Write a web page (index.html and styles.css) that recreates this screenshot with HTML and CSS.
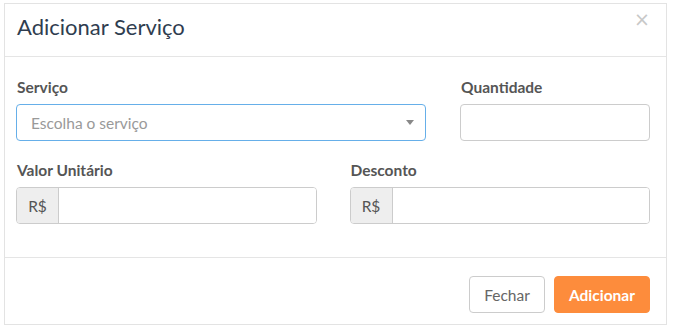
FILE: index.html
```html
<!DOCTYPE html>
<html lang="pt-BR">
<head>
    <meta charset="UTF-8">
    <title>Adicionar Serviço</title>
    <link rel="stylesheet" href="styles.css">
</head>
<body>
    <div class="modal">
        <!-- cabeçalho -->
        <div class="modal-header">
            <h4 class="modal-title">Adicionar Serviço</h4>
            <button class="close" type="button">&times;</button>
        </div>

        <!-- corpo -->
        <div class="modal-body">
            <div class="row row-top">
                <div class="field">
                    <label>Serviço</label>
                    <div class="select">
                        <span class="placeholder">Escolha o serviço</span>
                        <span class="caret"></span>
                    </div>
                </div>
                <div class="field">
                    <label>Quantidade</label>
                    <input class="input" type="text">
                </div>
            </div>
            <div class="row row-bottom">
                <div class="field">
                    <label>Valor Unitário</label>
                    <div class="input-group">
                        <span class="addon">R$</span>
                        <input class="input" type="text">
                    </div>
                </div>
                <div class="field">
                    <label>Desconto</label>
                    <div class="input-group">
                        <span class="addon">R$</span>
                        <input class="input" type="text">
                    </div>
                </div>
            </div>
        </div>

        <!-- rodapé -->
        <div class="modal-footer">
            <button class="btn btn-default" type="button">Fechar</button>
            <button class="btn btn-primary" type="button">Adicionar</button>
        </div>
    </div>
</body>
</html>
```

FILE: styles.css
```css
body {
    margin: 0;
    background: #fff;
    font-family: Lato, "Open Sans", sans-serif;
    color: #555;
}
.modal {
    margin: 3px 0 0 4px;
    width: 663px;
    height: 322px;
    box-sizing: border-box;
    border: 1px solid #e3e3e3;
    display: flex;
    flex-direction: column;
}
.modal-header {
    height: 53px;
    box-sizing: border-box;
    border-bottom: 1px solid #e5e5e5;
    display: flex;
    align-items: center;
    justify-content: space-between;
    padding: 0 16px 8px 12px;
}
.modal-title {
    margin: 0;
    font-size: 22px;
    font-weight: 400;
    color: #2f3d4f;
}
.close {
    border: none;
    background: none;
    padding: 0;
    font-family: "DejaVu Sans", sans-serif;
    font-size: 19px;
    line-height: 1;
    color: #c8c8c8;
    margin-top: -14px;
    cursor: pointer;
}
.modal-body {
    flex: 1;
    padding: 21px 16px 0 11px;
}
.row {
    display: grid;
}
.row-top {
    grid-template-columns: 410px 1fr;
    column-gap: 34px;
}
.row-bottom {
    grid-template-columns: 1fr 1fr;
    column-gap: 33px;
    margin-top: 20px;
}
.field label {
    display: block;
    font-size: 15.5px;
    font-weight: 700;
    color: #555;
    line-height: 18px;
    margin: 0 0 8px 1px;
}
.select,
.input,
.input-group {
    height: 37px;
    box-sizing: border-box;
    border: 1px solid #ccc;
    border-radius: 4px;
}
.select {
    border-color: #66afe9;
    display: flex;
    align-items: center;
    justify-content: space-between;
    padding: 0 11px 0 14px;
}
.placeholder {
    font-size: 15.5px;
    color: #999;
}
.caret {
    width: 0;
    height: 0;
    border-left: 4px solid transparent;
    border-right: 4px solid transparent;
    border-top: 5px solid #888;
}
.input {
    display: block;
    width: 100%;
    font: inherit;
    outline: none;
}
.input-group {
    display: flex;
    overflow: hidden;
}
.addon {
    width: 41px;
    flex: none;
    background: #eee;
    border-right: 1px solid #ccc;
    display: flex;
    align-items: center;
    justify-content: center;
    font-size: 15.5px;
    color: #555;
}
.input-group .input {
    border: none;
    border-radius: 0;
    height: 100%;
    flex: 1;
}
.modal-footer {
    height: 67px;
    box-sizing: border-box;
    border-top: 1px solid #e5e5e5;
    display: flex;
    justify-content: flex-end;
    align-items: flex-start;
    gap: 9px;
    padding: 18px 16px 0 0;
}
.btn {
    height: 37px;
    box-sizing: border-box;
    border-radius: 4px;
    font-family: Lato, sans-serif;
    font-size: 15.5px;
    padding: 0 12px;
    cursor: pointer;
}
.btn-default {
    background: #fff;
    border: 1px solid #ccc;
    color: #666;
    width: 76px;
}
.btn-primary {
    background: #fd8c3c;
    border: 1px solid #fd8c3c;
    color: #fff;
    font-weight: 700;
    width: 96px;
}
```
